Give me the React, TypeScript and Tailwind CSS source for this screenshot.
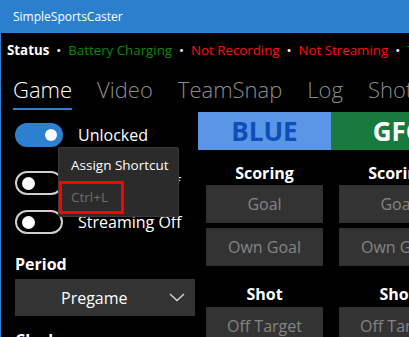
import type { ReactNode } from 'react';

const font = { fontFamily: '"Open Sans", "Noto Sans", sans-serif' };

function Toggle({ on }: { on: boolean }) {
  return on ? (
    <div className="flex items-center justify-end w-[48px] h-[24px] rounded-full bg-[#2d7fd0] pr-[6px] shrink-0">
      <div className="w-[12px] h-[12px] rounded-full bg-white" />
    </div>
  ) : (
    <div className="flex items-center w-[48px] h-[24px] rounded-full border-2 border-[#cfcfcf] pl-[5px] shrink-0">
      <div className="w-[13px] h-[13px] rounded-full bg-white" />
    </div>
  );
}

function ToggleRow({ on, label, className }: { on: boolean; label: string; className?: string }) {
  return (
    <div className={`flex items-center gap-[15px] ${className ?? ''}`}>
      <Toggle on={on} />
      <span className="text-[16px] leading-[20px] text-white whitespace-nowrap">{label}</span>
    </div>
  );
}

function ActionButton({ children, className }: { children: ReactNode; className?: string }) {
  return (
    <div
      className={`h-[38px] flex items-center justify-center bg-[#333333] border border-[#2e2e2e] text-[#858585] text-[16px] whitespace-nowrap overflow-hidden ${className ?? ''}`}
    >
      {children}
    </div>
  );
}

function TeamColumn({ name, headerBg, headerText }: { name: string; headerBg: string; headerText: string }) {
  return (
    <div className="w-[133px] shrink-0 flex flex-col">
      <div className={`h-[38px] flex items-center justify-center ${headerBg}`}>
        <span className={`text-[26px] font-bold leading-none whitespace-nowrap ${headerText}`}>{name}</span>
      </div>
      <div className="px-[8px] flex flex-col">
        <div className="mt-[13px] h-[20px] text-center text-white font-bold text-[16px] leading-[20px] whitespace-nowrap">
          Scoring
        </div>
        <ActionButton className="mt-[2px]">Goal</ActionButton>
        <ActionButton className="mt-[5px]">Own Goal</ActionButton>
        <div className="mt-[18px] h-[20px] text-center text-white font-bold text-[16px] leading-[20px] whitespace-nowrap">
          Shot
        </div>
        <ActionButton className="mt-[3px]">Off Target</ActionButton>
      </div>
    </div>
  );
}

export default function App() {
  return (
    <div
      className="relative w-[409px] h-[337px] overflow-hidden bg-black border-l border-[#2b7fcd] text-white"
      style={font}
    >
      {/* Title bar */}
      <div className="h-[33px] bg-[#2b7fcd] flex items-center pl-[12px] text-[12px] text-white">
        SimpleSportsCaster
      </div>

      {/* Status line */}
      <div className="flex items-center pt-[9px] pl-[6px] h-[26px] text-[13.3px] leading-[17px] whitespace-nowrap">
        <span className="font-bold text-white">Status</span>
        <span className="mx-[7px] text-white">•</span>
        <span className="text-[#0a8a0a]">Battery Charging</span>
        <span className="mx-[7px] text-white">•</span>
        <span className="text-[#ff1010]">Not Recording</span>
        <span className="mx-[7px] text-white">•</span>
        <span className="text-[#ff1010]">Not Streaming</span>
        <span className="mx-[7px] text-white">•</span>
        <span className="text-[#0a8a0a]">Time</span>
      </div>

      {/* Pivot tabs */}
      <div className="mt-[16px] pl-[12px] flex gap-[25px] text-[22px] font-light leading-[28px] whitespace-nowrap">
        <div className="flex flex-col">
          <span className="text-white">Game</span>
          <div className="mt-[5px] h-[2px] bg-[#2d7fd0]" />
        </div>
        <span className="text-[#8c8c8c]">Video</span>
        <span className="text-[#8c8c8c]">TeamSnap</span>
        <span className="text-[#8c8c8c]">Log</span>
        <span className="text-[#8c8c8c]">Shot</span>
      </div>

      {/* Content */}
      <div className="mt-[2px] flex">
        <div className="w-[197px] shrink-0 pl-[14px] pr-[3px] flex flex-col">
          <ToggleRow on label="Unlocked" className="mt-[11px]" />
          <ToggleRow on={false} label="Recording Off" className="mt-[24px]" />
          <ToggleRow on={false} label="Streaming Off" className="mt-[15px]" />
          <div className="mt-[20px] text-[16px] font-bold leading-[20px]">Period</div>
          <div className="mt-[5px] h-[37px] bg-[#333333] flex items-center pl-[46px] pr-[10px]">
            <span className="flex-1 text-[16px] text-white">Pregame</span>
            <svg width="16" height="9" viewBox="0 0 16 9" fill="none" stroke="#d8d8d8" strokeWidth="1.3">
              <path d="M1 1 L8 7.5 L15 1" />
            </svg>
          </div>
          <div className="mt-[14px] text-[16px] font-bold leading-[20px]">Clock</div>
        </div>
        <TeamColumn name="BLUE" headerBg="bg-[#5b96e6]" headerText="text-[#0c4fb8]" />
        <TeamColumn name="GFC" headerBg="bg-[#187a3c]" headerText="text-white" />
      </div>

      {/* Tooltip overlay */}
      <div className="absolute left-[57px] top-[147px] w-[121px] h-[70px] bg-[#2b2b2b] border border-[#3a3a3a] rounded-[2px]">
        <div className="absolute left-[12px] top-[7px] text-[13.5px] leading-[20px] text-white whitespace-nowrap">
          Assign Shortcut
        </div>
        <div className="absolute left-[0px] top-[33px] w-[65px] h-[33px] border-[3px] border-[#ff0000] flex items-center pl-[9px]">
          <span className="text-[13.5px] text-[#6e6e6e] whitespace-nowrap">Ctrl+L</span>
        </div>
      </div>
    </div>
  );
}
